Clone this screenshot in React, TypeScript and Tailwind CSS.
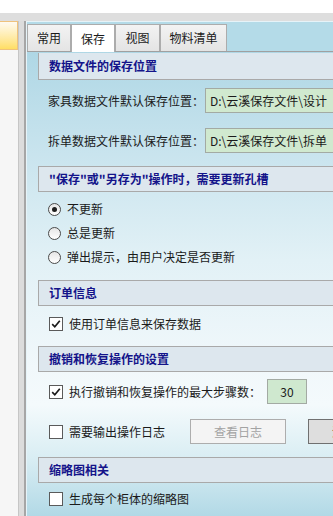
import React from 'react';

const tabs = [
  { label: '常用', w: 'w-[44px]' },
  { label: '保存', w: 'w-[44px]', active: true },
  { label: '视图', w: 'w-[45px]' },
  { label: '物料清单', w: 'w-[67px]' },
];

const SectionHeader = ({ children, first = false, className = '' }: { children: React.ReactNode; first?: boolean; className?: string }) => (
  <div
    className={`ml-[11px] w-[330px] shrink-0 flex items-center pl-[10px] bg-[#dde7ee] border border-[#a9a9a9] text-[#14148a] font-bold ${first ? 'h-[27px] border-t-0' : 'h-[26px]'} ${className}`}
  >
    {children}
  </div>
);

const Checkbox = ({ checked = false }: { checked?: boolean }) => (
  <span className="w-[14px] h-[14px] shrink-0 border border-[#5a5a5a] bg-white flex items-center justify-center">
    {checked && (
      <svg width="12" height="12" viewBox="0 0 12 12">
        <path d="M2.2 6.2 L4.8 8.8 L9.8 2.8" fill="none" stroke="#1a1a1a" strokeWidth="1.7" />
      </svg>
    )}
  </span>
);

const Radio = ({ checked = false }: { checked?: boolean }) => (
  <span className="w-[13px] h-[13px] shrink-0 rounded-full border border-[#4a4a4a] bg-gradient-to-b from-[#e6e6e6] to-white flex items-center justify-center">
    {checked && <span className="w-[5px] h-[5px] rounded-full bg-[#1e1e1e]" />}
  </span>
);

const PathRow = ({ label, value, className = '' }: { label: string; value: string; className?: string }) => (
  <div className={`h-[25px] shrink-0 flex items-center pl-[21px] ${className}`}>
    <span className="w-[157px] shrink-0">{label}</span>
    <div className="w-[200px] h-[25px] shrink-0 flex items-center pl-[4px] bg-[#d0e9cf] border border-[#a3aaa3]">
      {value}
    </div>
  </div>
);

const RadioRow = ({ label, checked = false }: { label: string; checked?: boolean }) => (
  <div className="h-[24px] shrink-0 flex items-center gap-[6px] pl-[21px]">
    <Radio checked={checked} />
    <span>{label}</span>
  </div>
);

export default function App() {
  return (
    <div className="w-[333px] h-[516px] overflow-hidden bg-white flex flex-col text-[12px] leading-none text-[#1a1a1a] font-['Noto_Sans_CJK_SC','Noto_Sans',sans-serif]">
      <div className="h-[13px] shrink-0 bg-white" />
      <div className="h-[8px] shrink-0 bg-[#dedede]" />

      <div className="flex flex-1 min-h-0">
        {/* left docked panel */}
        <div className="w-[18px] shrink-0 bg-[#f6f6f6] flex flex-col">
          <div className="h-[29px] border-t border-r border-b border-[#efc27c] bg-gradient-to-b from-[#fffaf0] to-[#ffde62]" />
        </div>
        <div className="w-[1px] shrink-0 bg-[#c6c6c6]" />
        <div className="w-[5px] shrink-0 bg-[#dcdcdc]" />
        <div className="w-[2px] shrink-0 bg-[#a6a6a6]" />

        {/* tab control */}
        <div className="flex-1 min-w-0 flex flex-col bg-[#b4dbe8] border-l border-t border-[#e6f3f8]">
          <div className="h-[29px] shrink-0 flex items-end">
            {tabs.map((t) => (
              <div
                key={t.label}
                className={`${t.w} shrink-0 flex items-center justify-center border border-[#acacac] ${
                  t.active ? 'h-[28px] bg-white border-b-0 relative top-[1px] z-10' : 'h-[27px] bg-gradient-to-b from-[#f3f3f3] to-[#e4e4e4] border-b-0'
                }`}
              >
                {t.label}
              </div>
            ))}
          </div>

          <div className="flex-1 min-h-0 overflow-hidden border-t border-[#a0a0a0] flex flex-col bg-[linear-gradient(to_bottom,#afd7e5_0%,#c9e4ee_22%,#e2f1f6_45%,#f1f8fb_68%,#f4fafc_76%,#d8edf3_88%,#b2d9e6_100%)]">
            <SectionHeader first className="mt-[1px]">数据文件的保存位置</SectionHeader>
            <PathRow className="mt-[8px]" label="家具数据文件默认保存位置：" value="D:\云溪保存文件\设计" />
            <PathRow className="mt-[15px]" label="拆单数据文件默认保存位置：" value="D:\云溪保存文件\拆单" />

            <SectionHeader className="mt-[13px]">"保存"或"另存为"操作时，需要更新孔槽</SectionHeader>
            <div className="mt-[5px] flex flex-col">
              <RadioRow checked label="不更新" />
              <RadioRow label="总是更新" />
              <RadioRow label="弹出提示，由用户决定是否更新" />
            </div>

            <SectionHeader className="mt-[11px]">订单信息</SectionHeader>
            <div className="mt-[6px] h-[24px] shrink-0 flex items-center gap-[6px] pl-[22px]">
              <Checkbox checked />
              <span>使用订单信息来保存数据</span>
            </div>

            <SectionHeader className="mt-[10px]">撤销和恢复操作的设置</SectionHeader>
            <div className="mt-[7px] h-[25px] shrink-0 flex items-center pl-[22px]">
              <Checkbox checked />
              <span className="ml-[6px] w-[198px] shrink-0">执行撤销和恢复操作的最大步骤数：</span>
              <div className="w-[40px] h-[25px] shrink-0 flex items-center justify-center bg-[#cfe8cf] border border-[#a3aaa3]">30</div>
            </div>
            <div className="mt-[15px] h-[25px] shrink-0 flex items-center pl-[22px]">
              <Checkbox />
              <span className="ml-[6px] w-[121px] shrink-0">需要输出操作日志</span>
              <button className="w-[96px] h-[25px] shrink-0 flex items-center justify-center bg-[#f4f4f4] border border-[#adadad] text-[#a3a3a3]">
                查看日志
              </button>
              <button className="ml-[22px] w-[96px] h-[25px] shrink-0 flex items-center justify-center bg-[#dedede] border border-[#707070]">
                清空日志
              </button>
            </div>

            <SectionHeader className="mt-[13px]">缩略图相关</SectionHeader>
            <div className="mt-[4px] h-[24px] shrink-0 flex items-center gap-[6px] pl-[22px]">
              <Checkbox />
              <span>生成每个柜体的缩略图</span>
            </div>
          </div>
        </div>
      </div>
    </div>
  );
}
